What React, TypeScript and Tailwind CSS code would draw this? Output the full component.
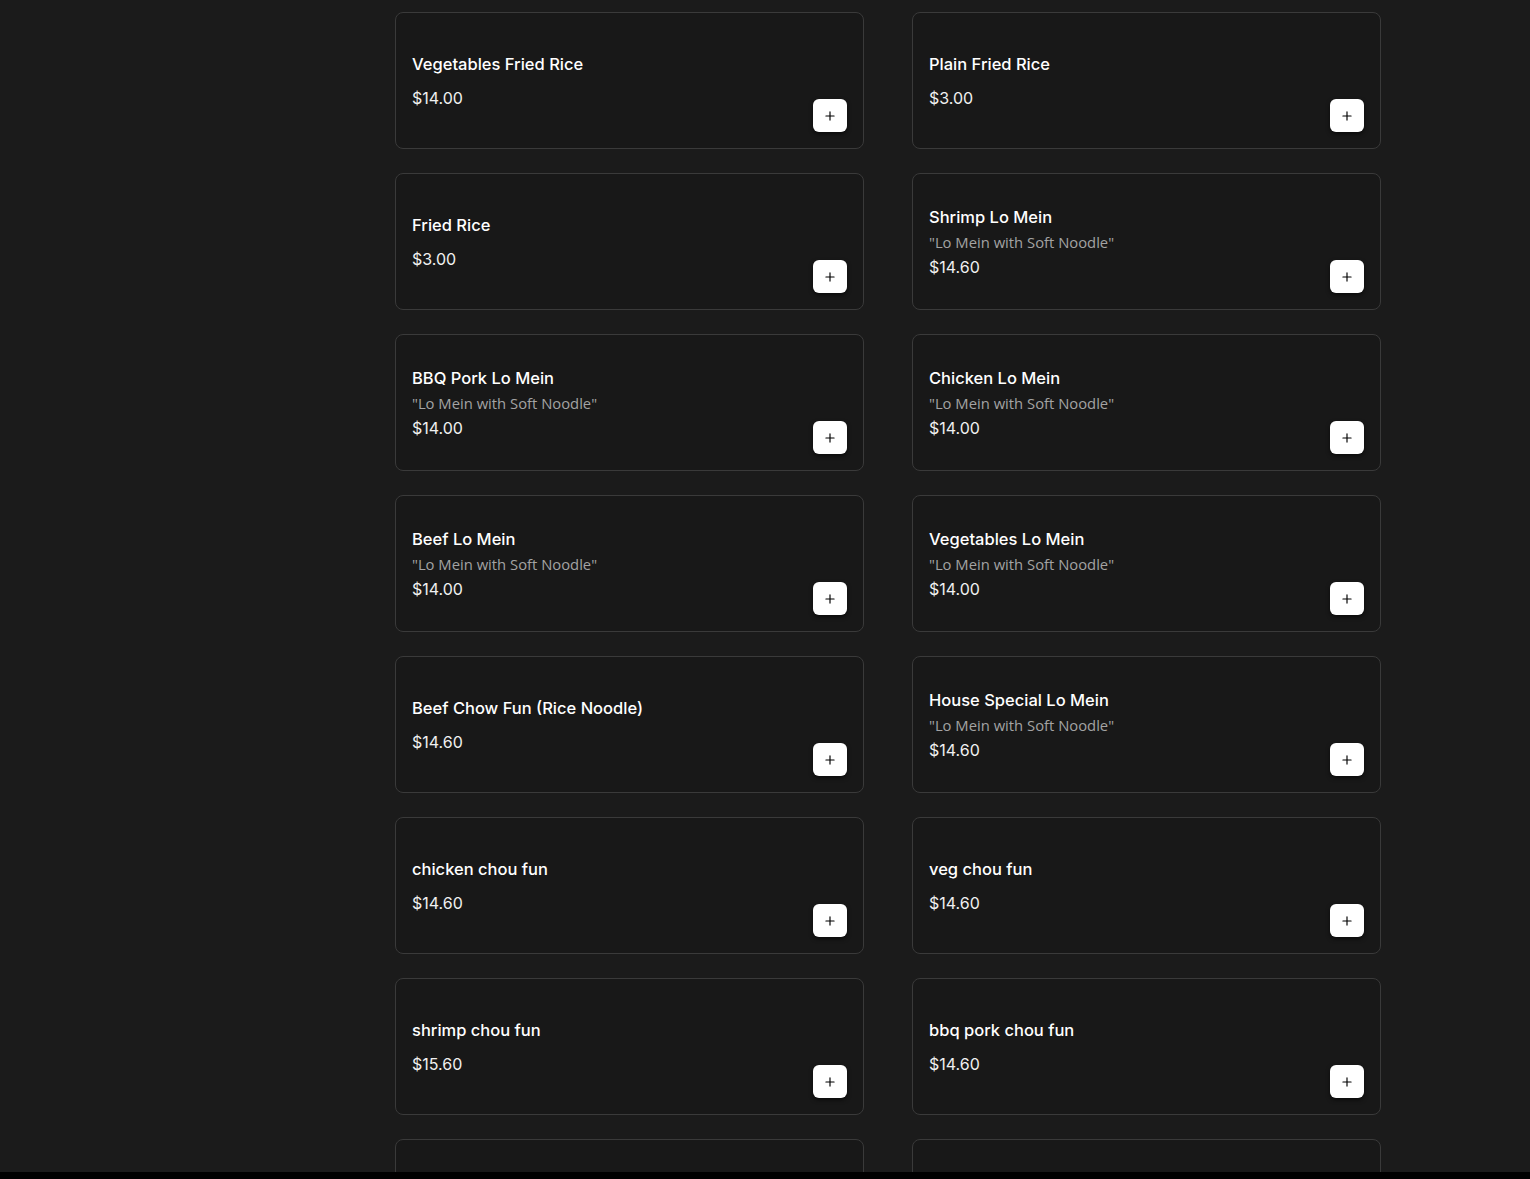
import { Plus } from "lucide-react";

type Item = { name: string; desc?: string; price: string };

const items: Item[] = [
  { name: "Vegetables Fried Rice", price: "$14.00" },
  { name: "Plain Fried Rice", price: "$3.00" },
  { name: "Fried Rice", price: "$3.00" },
  { name: "Shrimp Lo Mein", desc: '"Lo Mein with Soft Noodle"', price: "$14.60" },
  { name: "BBQ Pork Lo Mein", desc: '"Lo Mein with Soft Noodle"', price: "$14.00" },
  { name: "Chicken Lo Mein", desc: '"Lo Mein with Soft Noodle"', price: "$14.00" },
  { name: "Beef Lo Mein", desc: '"Lo Mein with Soft Noodle"', price: "$14.00" },
  { name: "Vegetables Lo Mein", desc: '"Lo Mein with Soft Noodle"', price: "$14.00" },
  { name: "Beef Chow Fun (Rice Noodle)", price: "$14.60" },
  { name: "House Special Lo Mein", desc: '"Lo Mein with Soft Noodle"', price: "$14.60" },
  { name: "chicken chou fun", price: "$14.60" },
  { name: "veg chou fun", price: "$14.60" },
  { name: "shrimp chou fun", price: "$15.60" },
  { name: "bbq pork chou fun", price: "$14.60" },
  { name: "", price: "" },
  { name: "", price: "" },
];

function MenuCard({ item }: { item: Item }) {
  return (
    <div className="relative flex h-[137px] flex-col justify-center rounded-lg border border-[#3a3a3a] bg-[#181818] px-4">
      {item.name && (
        <>
          <p className="text-[16.5px] font-medium leading-6 text-white">{item.name}</p>
          {item.desc ? (
            <>
              <p className="font-['Open_Sans',sans-serif] text-[14.8px] leading-[26px] text-[#a3a3a3]">{item.desc}</p>
              <p className="text-[16px] leading-6 text-[#f0f0f0]">{item.price}</p>
            </>
          ) : (
            <p className="mt-[10px] text-[16px] leading-6 text-[#f0f0f0]">{item.price}</p>
          )}
          <button
            type="button"
            className="absolute bottom-4 right-4 flex h-[33px] w-[34px] items-center justify-center rounded-md bg-white text-black shadow-[0_2px_4px_rgba(0,0,0,0.6)]"
          >
            <Plus className="h-3.5 w-3.5" strokeWidth={2} />
          </button>
        </>
      )}
    </div>
  );
}

export default function App() {
  return (
    <div className="flex h-screen flex-col overflow-hidden bg-[#1b1b1b] font-['Inter',sans-serif]">
      <div className="flex-1 overflow-hidden pl-[395px] pt-3">
        <div className="grid grid-cols-[469px_469px] gap-x-12 gap-y-6">
          {items.map((item, i) => (
            <MenuCard key={i} item={item} />
          ))}
        </div>
      </div>
      <div className="h-[7px] bg-black" />
    </div>
  );
}
